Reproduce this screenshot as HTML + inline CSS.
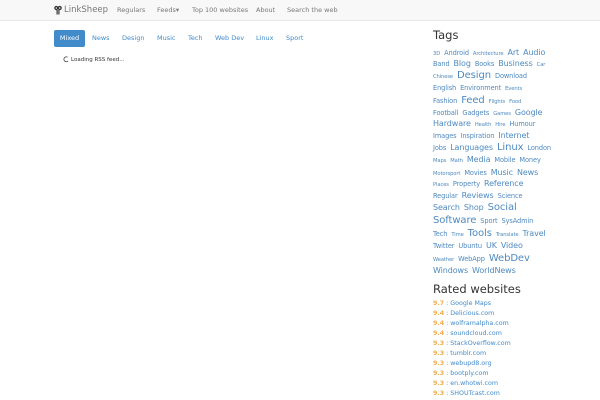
<!DOCTYPE html>
<html><head><meta charset="utf-8"><style>
*{margin:0;padding:0;box-sizing:border-box}
body{width:600px;height:400px;overflow:hidden;background:#fff;font-family:"DejaVu Sans","Liberation Sans",sans-serif;position:relative}
.nav{position:absolute;left:0;top:0;width:600px;height:21px;background:#f8f8f8;border-bottom:1px solid #e7e7e7}
.nav span{position:absolute;top:0;line-height:20px;font-size:6.5px;color:#777}
.brand{font-size:8.5px!important;color:#777}
.pill{position:absolute;top:30px;height:17px;line-height:17px;font-size:6.5px;color:#428bca}
.pill.act{background:#428bca;color:#fff;border-radius:2px;left:54px;width:31px;text-align:center}
.load{position:absolute;left:71px;top:55px;font-size:5.5px;color:#333;line-height:10px}
h3{position:absolute;left:433px;font-weight:normal;font-size:11.5px;color:#333}
.tl{position:absolute;left:433px;height:12px;line-height:12px;white-space:nowrap;color:#4f8ac0;word-spacing:-1px;letter-spacing:-0.1px}
.a{font-size:5.2px}.b{font-size:6.6px}.c{font-size:8px}.d{font-size:10px}
.r{position:absolute;left:433px;font-size:6.3px;line-height:10px;color:#428bca;white-space:nowrap}
.r b{color:#f0ad4e}
</style></head><body>
<div class="nav">
<svg style="position:absolute;left:54px;top:5px" width="8" height="10" viewBox="0 0 8 10"><circle cx="2.3" cy="3" r="2.1" fill="#333"/><circle cx="5.7" cy="3" r="2.1" fill="#333"/><circle cx="2.3" cy="3" r="0.8" fill="#f8f8f8"/><circle cx="5.7" cy="3" r="0.8" fill="#f8f8f8"/><rect x="2.5" y="5" width="1.2" height="4.5" fill="#333"/><rect x="4.3" y="5" width="1.2" height="4.5" fill="#333"/></svg>
<span class="brand" style="left:64px">LinkSheep</span>
<span style="left:117px">Regulars</span>
<span style="left:157px">Feeds▾</span>
<span style="left:192px">Top 100 websites</span>
<span style="left:256px">About</span>
<span style="left:287px">Search the web</span>
</div>
<div class="pill act">Mixed</div>
<div class="pill" style="left:92px">News</div>
<div class="pill" style="left:122px">Design</div>
<div class="pill" style="left:157px">Music</div>
<div class="pill" style="left:188px">Tech</div>
<div class="pill" style="left:215px">Web Dev</div>
<div class="pill" style="left:256px">Linux</div>
<div class="pill" style="left:286px">Sport</div>
<svg style="position:absolute;left:63px;top:56px" width="6" height="7" viewBox="0 0 6 7"><path d="M4.5 1.2A2.4 2.4 0 1 0 5 5" fill="none" stroke="#555" stroke-width="0.9"/></svg>
<div class="load">Loading RSS feed...</div>
<h3 style="top:28px">Tags</h3>
<div class="tl" style="top:44px"><span class="a">3D</span> <span class="b">Android</span> <span class="a">Architecture</span> <span class="c">Art</span> <span class="c">Audio</span></div>
<div class="tl" style="top:55px"><span class="b">Band</span> <span class="c">Blog</span> <span class="b">Books</span> <span class="c">Business</span> <span class="a">Car</span></div>
<div class="tl" style="top:67px"><span class="a">Chinese</span> <span class="d">Design</span> <span class="b">Download</span></div>
<div class="tl" style="top:79px"><span class="b">English</span> <span class="b">Environment</span> <span class="a">Events</span></div>
<div class="tl" style="top:92px"><span class="b">Fashion</span> <span class="d">Feed</span> <span class="a">Flights</span> <span class="a">Food</span></div>
<div class="tl" style="top:104px"><span class="b">Football</span> <span class="b">Gadgets</span> <span class="a">Games</span> <span class="c">Google</span></div>
<div class="tl" style="top:115px"><span class="c">Hardware</span> <span class="a">Health</span> <span class="a">Hire</span> <span class="b">Humour</span></div>
<div class="tl" style="top:127px"><span class="b">Images</span> <span class="b">Inspiration</span> <span class="c">Internet</span></div>
<div class="tl" style="top:139px"><span class="b">Jobs</span> <span class="c">Languages</span> <span class="d">Linux</span> <span class="b">London</span></div>
<div class="tl" style="top:151px"><span class="a">Maps</span> <span class="a">Math</span> <span class="c">Media</span> <span class="b">Mobile</span> <span class="b">Money</span></div>
<div class="tl" style="top:164px"><span class="a">Motorsport</span> <span class="b">Movies</span> <span class="c">Music</span> <span class="c">News</span></div>
<div class="tl" style="top:175px"><span class="a">Places</span> <span class="b">Property</span> <span class="c">Reference</span></div>
<div class="tl" style="top:187px"><span class="b">Regular</span> <span class="c">Reviews</span> <span class="b">Science</span></div>
<div class="tl" style="top:199px"><span class="c">Search</span> <span class="c">Shop</span> <span class="d">Social</span></div>
<div class="tl" style="top:212px"><span class="d">Software</span> <span class="b">Sport</span> <span class="b">SysAdmin</span></div>
<div class="tl" style="top:225px"><span class="b">Tech</span> <span class="a">Time</span> <span class="d">Tools</span> <span class="a">Translate</span> <span class="c">Travel</span></div>
<div class="tl" style="top:237px"><span class="b">Twitter</span> <span class="b">Ubuntu</span> <span class="c">UK</span> <span class="c">Video</span></div>
<div class="tl" style="top:250px"><span class="a">Weather</span> <span class="b">WebApp</span> <span class="d">WebDev</span></div>
<div class="tl" style="top:262px"><span class="c">Windows</span> <span class="c">WorldNews</span></div>
<h3 style="top:282px">Rated websites</h3>
<div class="r" style="top:299px"><b>9.7</b> : Google Maps</div>
<div class="r" style="top:309px"><b>9.4</b> : Delicious.com</div>
<div class="r" style="top:319px"><b>9.4</b> : wolframalpha.com</div>
<div class="r" style="top:329px"><b>9.4</b> : soundcloud.com</div>
<div class="r" style="top:339px"><b>9.3</b> : StackOverflow.com</div>
<div class="r" style="top:349px"><b>9.3</b> : tumblr.com</div>
<div class="r" style="top:359px"><b>9.3</b> : webupd8.org</div>
<div class="r" style="top:369px"><b>9.3</b> : bootply.com</div>
<div class="r" style="top:379px"><b>9.3</b> : en.whotwi.com</div>
<div class="r" style="top:389px"><b>9.3</b> : SHOUTcast.com</div>
</body></html>
